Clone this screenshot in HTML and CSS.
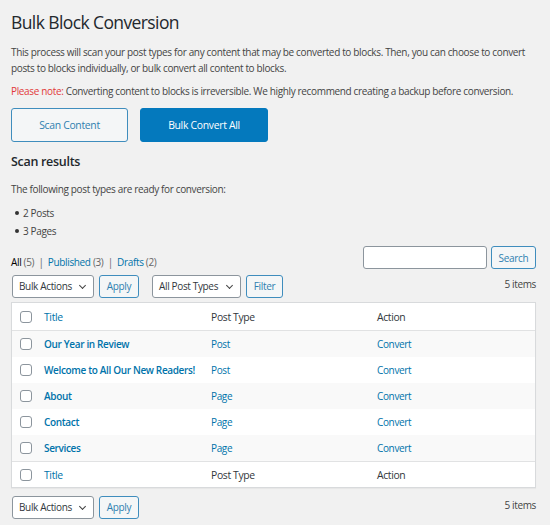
FILE: index.html
```html
<!DOCTYPE html>
<html>
<head>
<meta charset="utf-8">
<link rel="stylesheet" href="styles.css">
</head>
<body>
<div class="wrap">
  <h1 class="title">Bulk Block Conversion</h1>
  <p class="intro">This process will scan your post types for any content that may be converted to blocks. Then, you can choose to convert posts to blocks individually, or bulk convert all content to blocks.</p>
  <p class="note"><span class="warn">Please note:</span> Converting content to blocks is irreversible. We highly recommend creating a backup before conversion.</p>
  <div class="actions">
    <button class="btn btn-secondary btn-large">Scan Content</button>
    <button class="btn btn-primary btn-large">Bulk Convert All</button>
  </div>
  <h2 class="subtitle">Scan results</h2>
  <p class="ready">The following post types are ready for conversion:</p>
  <ul class="types">
    <li>2 Posts</li>
    <li>3 Pages</li>
  </ul>
  <div class="filters-top">
    <div class="subsubsub">
      <span class="current">All</span> <span class="count">(5)</span> <span class="sep">|</span>
      <a href="#">Published</a> <span class="count">(3)</span> <span class="sep">|</span>
      <a href="#">Drafts</a> <span class="count">(2)</span>
    </div>
    <div class="search-box">
      <input class="search-input" type="text">
      <button class="btn btn-secondary btn-small">Search</button>
    </div>
  </div>
  <div class="tablenav">
    <div class="nav-left">
      <div class="select sel-bulk">Bulk Actions <span class="chev"></span></div>
      <button class="btn btn-secondary btn-small btn-apply">Apply</button>
      <div class="select sel-types">All Post Types <span class="chev"></span></div>
      <button class="btn btn-secondary btn-small">Filter</button>
    </div>
    <div class="items">5 items</div>
  </div>
  <div class="list">
    <div class="row head">
      <div class="cell cb"><span class="box"></span></div>
      <div class="cell col-title"><a href="#">Title</a></div>
      <div class="cell col-type">Post Type</div>
      <div class="cell col-action">Action</div>
    </div>
    <div class="row alt">
      <div class="cell cb"><span class="box"></span></div>
      <div class="cell col-title"><a class="strong" href="#">Our Year in Review</a></div>
      <div class="cell col-type"><a href="#">Post</a></div>
      <div class="cell col-action"><a href="#">Convert</a></div>
    </div>
    <div class="row">
      <div class="cell cb"><span class="box"></span></div>
      <div class="cell col-title"><a class="strong" href="#">Welcome to All Our New Readers!</a></div>
      <div class="cell col-type"><a href="#">Post</a></div>
      <div class="cell col-action"><a href="#">Convert</a></div>
    </div>
    <div class="row alt">
      <div class="cell cb"><span class="box"></span></div>
      <div class="cell col-title"><a class="strong" href="#">About</a></div>
      <div class="cell col-type"><a href="#">Page</a></div>
      <div class="cell col-action"><a href="#">Convert</a></div>
    </div>
    <div class="row">
      <div class="cell cb"><span class="box"></span></div>
      <div class="cell col-title"><a class="strong" href="#">Contact</a></div>
      <div class="cell col-type"><a href="#">Page</a></div>
      <div class="cell col-action"><a href="#">Convert</a></div>
    </div>
    <div class="row alt">
      <div class="cell cb"><span class="box"></span></div>
      <div class="cell col-title"><a class="strong" href="#">Services</a></div>
      <div class="cell col-type"><a href="#">Page</a></div>
      <div class="cell col-action"><a href="#">Convert</a></div>
    </div>
    <div class="row foot">
      <div class="cell cb"><span class="box"></span></div>
      <div class="cell col-title"><a href="#">Title</a></div>
      <div class="cell col-type">Post Type</div>
      <div class="cell col-action">Action</div>
    </div>
  </div>
  <div class="tablenav bottom">
    <div class="nav-left">
      <div class="select sel-bulk">Bulk Actions <span class="chev"></span></div>
      <button class="btn btn-secondary btn-small btn-apply">Apply</button>
    </div>
    <div class="items">5 items</div>
  </div>
</div>
</body>
</html>
```

FILE: styles.css
```css
html, body {
  margin: 0;
  padding: 0;
  background: #f1f1f1;
}
body {
  font-family: "Open Sans", "Noto Sans", sans-serif;
  font-size: 10px;
  letter-spacing: -0.35px;
  color: #444;
  line-height: 16px;
}
a {
  color: #0073aa;
  text-decoration: none;
}
.wrap {
  width: 525px;
  padding: 0 0 0 11px;
}
.title {
  margin: 0;
  padding-top: 10px;
  font-size: 17.5px;
  letter-spacing: -0.6px;
  font-weight: 400;
  line-height: 24px;
  color: #23282d;
}
.intro {
  margin: 10px 0 0;
}
.note {
  margin: 7px 0 0;
}
.warn {
  color: #e23a3a;
}
.actions {
  display: flex;
  gap: 12px;
  margin-top: 9px;
}
.btn {
  font-family: inherit;
  letter-spacing: -0.3px;
  border-radius: 3px;
  cursor: pointer;
  padding: 0;
  box-sizing: border-box;
}
.btn-large {
  height: 34px;
  font-size: 10.4px;
}
.btn-secondary {
  background: #f4f6f7;
  border: 1px solid #3f8dbd;
  color: #2f7fb0;
}
.btn-primary {
  background: #0479bd;
  border: 1px solid #0479bd;
  color: #fff;
}
.actions .btn-secondary { width: 117px; }
.actions .btn-primary { width: 128px; }
.subtitle {
  margin: 11px 0 0;
  font-size: 12.5px;
  letter-spacing: -0.3px;
  font-weight: 600;
  line-height: 18px;
  color: #23282d;
}
.ready {
  margin: 10px 0 0;
}
.types {
  margin: 7px 0 0;
  padding: 0 0 0 12px;
  list-style: none;
}
.types li {
  position: relative;
  line-height: 18px;
}
.types li::before {
  content: "";
  position: absolute;
  left: -8px;
  top: 7px;
  width: 4px;
  height: 4px;
  border-radius: 50%;
  background: #333;
}
.filters-top {
  display: flex;
  justify-content: space-between;
  align-items: flex-start;
  margin-top: 6px;
}
.subsubsub {
  padding-top: 8px;
  color: #666;
}
.subsubsub .current {
  color: #000;
}
.sep {
  color: #666;
  margin: 0 2px;
}
.search-box {
  display: flex;
  gap: 4px;
}
.search-input {
  width: 124px;
  height: 23px;
  box-sizing: border-box;
  border: 1px solid #8c959d;
  border-radius: 3px;
  background: #fff;
  margin: 0;
}
.btn-small {
  height: 23px;
  font-size: 10px;
  padding: 0 6px;
}
.search-box .btn-small { width: 45px; }
.tablenav {
  display: flex;
  justify-content: space-between;
  align-items: center;
  margin-top: 4px;
  height: 24px;
}
.tablenav .items {
  margin-top: -4px;
  color: #444;
}
.tablenav.bottom {
  margin-top: 7px;
}
.tablenav.bottom .items {
  margin-top: -5px;
}
.nav-left {
  display: flex;
  align-items: center;
}
.select {
  box-sizing: border-box;
  height: 23px;
  border: 1px solid #8c959d;
  border-radius: 3px;
  background: #fff;
  color: #32373c;
  padding: 0 0 0 6px;
  display: flex;
  align-items: center;
  position: relative;
}
.sel-bulk { width: 82px; margin-left: 1px; }
.sel-types { width: 89px; margin-left: 13px; }
.chev {
  position: absolute;
  right: 8px;
  top: 7px;
  width: 4px;
  height: 4px;
  border-right: 1.4px solid #444;
  border-bottom: 1.4px solid #444;
  transform: rotate(45deg);
}
.btn-apply { width: 40px; margin-left: 5px; }
.sel-types + .btn-small { width: 37px; margin-left: 5px; }
.list {
  margin-top: 4px;
  background: #fff;
  border: 1px solid #d8dadc;
  box-shadow: 0 1px 1px rgba(0,0,0,0.04);
}
.row {
  display: flex;
  align-items: center;
  height: 26px;
}
.row.alt {
  background: #f9f9f9;
}
.row.head {
  height: 27px;
  border-bottom: 1px solid #e1e2e3;
}
.row.foot {
  height: 25px;
  border-top: 1px solid #e1e2e3;
}
.row.head, .row.foot {
  color: #32373c;
  font-size: 10.4px;
}
.cell.cb {
  width: 32px;
  padding-left: 8px;
  box-sizing: border-box;
  display: flex;
  align-items: center;
}
.box {
  display: block;
  width: 12px;
  height: 12px;
  box-sizing: border-box;
  border: 1px solid #8c959d;
  border-radius: 3px;
  background: #fff;
}
.col-title {
  width: 167px;
}
.col-type {
  width: 166px;
}
.col-action {
  flex: 1;
}
.strong {
  font-weight: 600;
}
```
